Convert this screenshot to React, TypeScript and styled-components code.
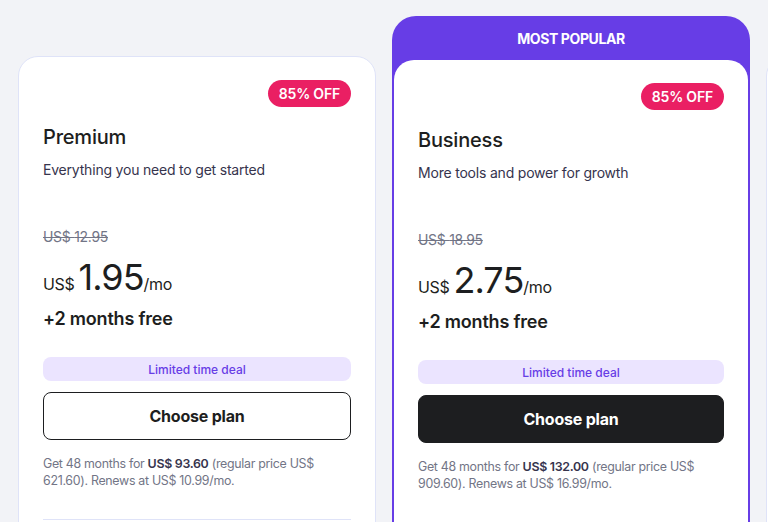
import styled, { createGlobalStyle } from 'styled-components'

const GlobalStyle = createGlobalStyle`
  html, body {
    margin: 0;
    padding: 0;
    background: #f2f3f7;
    overflow: hidden;
  }
  body {
    font-family: Inter, 'Noto Sans', 'Liberation Sans', sans-serif;
    color: #1d1e20;
  }
`

const Page = styled.div`
  display: flex;
  align-items: flex-start;
  gap: 16px;
  width: 768px;
  height: 522px;
  padding: 16px 0 0 18px;
  box-sizing: border-box;
  overflow: hidden;
`

const PlainCard = styled.div`
  flex-shrink: 0;
  width: 358px;
  margin-top: 40px;
  box-sizing: border-box;
  background: #fff;
  border: 1px solid #dfe3f8;
  border-radius: 20px;
  min-height: 520px;
`

const PopularFrame = styled.div`
  flex-shrink: 0;
  width: 358px;
  box-sizing: border-box;
  background: #673de6;
  border-radius: 24px;
  padding: 0 2px 2px;
  min-height: 560px;
`

const Ribbon = styled.div`
  height: 44px;
  display: flex;
  align-items: center;
  justify-content: center;
  color: #fff;
  font-size: 14px;
  font-weight: 700;
  letter-spacing: -0.4px;
`

const PopularInner = styled.div`
  background: #fff;
  border-radius: 20px 20px 22px 22px;
  min-height: 514px;
`

const Body = styled.div`
  padding: 23px 24px 0;
  display: flex;
  flex-direction: column;
`

const BadgeRow = styled.div`
  display: flex;
  justify-content: flex-end;
`

const Badge = styled.span`
  height: 27px;
  padding: 0 11px;
  border-radius: 14px;
  background: #ea1f63;
  color: #fff;
  font-size: 14px;
  font-weight: 600;
  letter-spacing: -0.2px;
  display: flex;
  align-items: center;
`

const Title = styled.h2`
  margin: 16px 0 0;
  font-size: 20px;
  line-height: 28px;
  font-weight: 500;
  letter-spacing: -0.2px;
`

const Subtitle = styled.p`
  margin: 9px 0 0;
  font-size: 14px;
  line-height: 20px;
  color: #36344d;
  letter-spacing: -0.2px;
`

const OldPrice = styled.s`
  margin-top: 47px;
  font-size: 14px;
  line-height: 20px;
  color: #727586;
  letter-spacing: -0.3px;
`

const PriceLine = styled.div`
  margin-top: 10px;
  display: flex;
  align-items: baseline;
  height: 40px;
  letter-spacing: -0.3px;
`

const Currency = styled.span`
  font-size: 16px;
  margin-right: 4px;
`

const Amount = styled.span`
  font-size: 36px;
  line-height: 40px;
  letter-spacing: -1px;
`

const Period = styled.span`
  font-size: 16px;
`

const Bonus = styled.div`
  margin-top: 10px;
  font-size: 18px;
  line-height: 24px;
  font-weight: 600;
  letter-spacing: -0.2px;
`

const Deal = styled.div`
  margin-top: 26px;
  height: 24px;
  border-radius: 8px;
  background: #ebe4ff;
  color: #673de6;
  font-size: 12px;
  font-weight: 500;
  display: flex;
  align-items: center;
  justify-content: center;
`

const ChooseButton = styled.button<{ $dark?: boolean }>`
  margin-top: 11px;
  height: 48px;
  border-radius: 8px;
  font-family: inherit;
  font-size: 16px;
  font-weight: 700;
  letter-spacing: -0.2px;
  cursor: pointer;
  border: 1px solid #1d1e20;
  background: ${p => (p.$dark ? '#1d1e20' : '#fff')};
  color: ${p => (p.$dark ? '#fff' : '#1d1e20')};
`

const FinePrint = styled.p`
  margin: 16px 0 0;
  font-size: 12.4px;
  line-height: 16.5px;
  color: #727586;
  letter-spacing: -0.3px;
  b {
    font-weight: 600;
    color: #36344d;
  }
`

const Divider = styled.hr`
  margin: 30px 0 0;
  border: none;
  border-top: 1px solid #dfe3f8;
`

type Plan = {
  name: string
  tagline: string
  old: string
  price: string
  total: string
  regular: string
  renew: string
}

const PlanBody = ({ plan, dark }: { plan: Plan; dark?: boolean }) => (
  <Body>
    <BadgeRow>
      <Badge>85% OFF</Badge>
    </BadgeRow>
    <Title>{plan.name}</Title>
    <Subtitle>{plan.tagline}</Subtitle>
    <OldPrice>US$ {plan.old}</OldPrice>
    <PriceLine>
      <Currency>US$</Currency>
      <Amount>{plan.price}</Amount>
      <Period>/mo</Period>
    </PriceLine>
    <Bonus>+2 months free</Bonus>
    <Deal>Limited time deal</Deal>
    <ChooseButton $dark={dark}>Choose plan</ChooseButton>
    <FinePrint>
      Get 48 months for <b>US$ {plan.total}</b> (regular price US$ {plan.regular}). Renews at US$ {plan.renew}/mo.
    </FinePrint>
    <Divider />
  </Body>
)

const premium: Plan = {
  name: 'Premium',
  tagline: 'Everything you need to get started',
  old: '12.95',
  price: '1.95',
  total: '93.60',
  regular: '621.60',
  renew: '10.99',
}

const business: Plan = {
  name: 'Business',
  tagline: 'More tools and power for growth',
  old: '18.95',
  price: '2.75',
  total: '132.00',
  regular: '909.60',
  renew: '16.99',
}

const App = () => (
  <>
    <GlobalStyle />
    <Page>
      <PlainCard>
        <PlanBody plan={premium} />
      </PlainCard>
      <PopularFrame>
        <Ribbon>MOST POPULAR</Ribbon>
        <PopularInner>
          <PlanBody plan={business} dark />
        </PopularInner>
      </PopularFrame>
      {/* next plan card, only its left edge is in view */}
      <PlainCard />
    </Page>
  </>
)

export default App
